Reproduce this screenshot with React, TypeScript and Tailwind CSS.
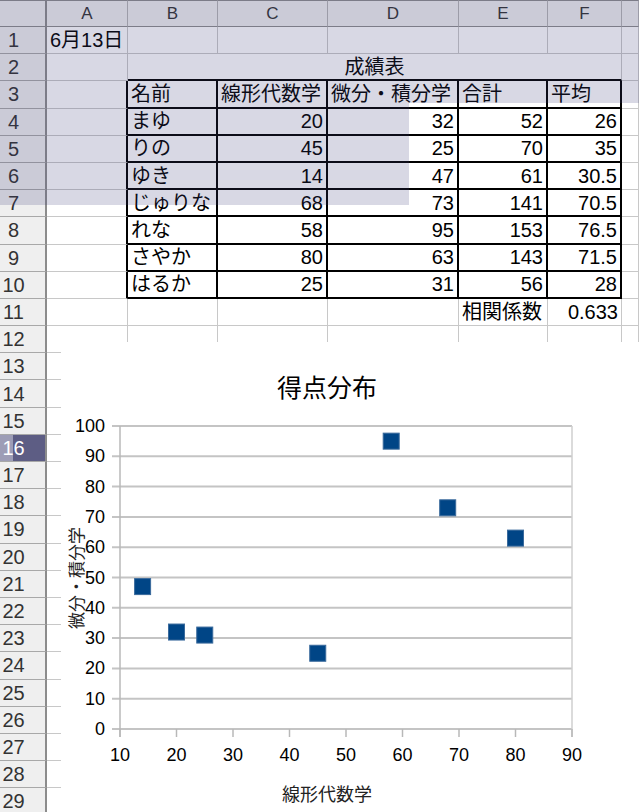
import React from 'react';

const COLS = ['A', 'B', 'C', 'D', 'E', 'F', ''];
const ROWS = Array.from({ length: 29 }, (_, i) => i + 1);

const scores: [string, number, number, number, number][] = [
  ['まゆ', 20, 32, 52, 26],
  ['りの', 45, 25, 70, 35],
  ['ゆき', 14, 47, 61, 30.5],
  ['じゅりな', 68, 73, 141, 70.5],
  ['れな', 58, 95, 153, 76.5],
  ['さやか', 80, 63, 143, 71.5],
  ['はるか', 25, 31, 56, 28],
];

const LIGHT = 'border-r border-b border-[#c8c8c8]';
const TABLE = 'border-r-2 border-b-2 border-black';
const COL_A_EDGE = 'border-r-2 border-r-black border-b border-b-[#c8c8c8]';

function Cell({ children, className = '', right = false }: { children?: React.ReactNode; className?: string; right?: boolean }) {
  return (
    <div
      className={`flex items-center whitespace-nowrap px-[3px] text-[20px] leading-[24px] text-black ${
        right ? 'justify-end' : 'justify-start'
      } ${className}`}
    >
      {children}
    </div>
  );
}

function RowHeader({ n }: { n: number }) {
  const active = n === 16;
  return (
    <div
      className={`relative flex items-center border-b border-r-2 border-b-[#a8a8a8] border-r-[#8c8c8c] text-[20px] leading-[24px] ${
        active ? 'bg-[#5d5d84] text-white' : 'bg-[#efefef] text-[#333]'
      }`}
    >
      {active && <span className="absolute left-0 top-0 bottom-0 w-[13px] bg-[#9d9db6]" />}
      <span className="relative w-[27px] text-center">{n}</span>
    </div>
  );
}

function rowCells(r: number) {
  const out: React.ReactNode[] = [];
  if (r === 2) {
    out.push(<Cell key="a" className={LIGHT} />);
    out.push(
      <Cell key="bf" className="col-span-5 justify-center border-r border-b-2 border-r-[#c8c8c8] border-b-black">
        <span className="w-full text-center">成績表</span>
      </Cell>
    );
    out.push(<Cell key="g" className={LIGHT} />);
    return out;
  }
  const inTable = r >= 3 && r <= 10;
  for (let c = 0; c < 7; c++) {
    let cls = LIGHT;
    if (inTable && c >= 1 && c <= 5) cls = TABLE;
    else if (inTable && c === 0) cls = COL_A_EDGE;
    let content: React.ReactNode = null;
    let right = false;
    if (r === 1 && c === 0) content = '6月13日';
    if (r === 3 && c >= 1 && c <= 5) content = ['名前', '線形代数学', '微分・積分学', '合計', '平均'][c - 1];
    if (r >= 4 && r <= 10 && c >= 1 && c <= 5) {
      const v = scores[r - 4][c - 1];
      content = v;
      right = c > 1;
    }
    if (r === 11 && c === 4) content = '相関係数';
    if (r === 11 && c === 5) {
      content = '0.633';
      right = true;
    }
    out.push(
      <Cell key={c} className={cls} right={right}>
        {content}
      </Cell>
    );
  }
  return out;
}

const points: [number, number][] = [
  [20, 32],
  [45, 25],
  [14, 47],
  [68, 73],
  [58, 95],
  [80, 63],
  [25, 31],
];

function ScatterChart() {
  const x0 = 59;
  const x1 = 511;
  const yBottom = 387;
  const yTop = 84;
  const sx = (v: number) => x0 + ((v - 10) / 80) * (x1 - x0);
  const sy = (v: number) => yBottom - (v / 100) * (yBottom - yTop);
  const font = "'Liberation Sans', 'Noto Sans CJK JP', sans-serif";
  const yTicks = [0, 10, 20, 30, 40, 50, 60, 70, 80, 90, 100];
  const xTicks = [10, 20, 30, 40, 50, 60, 70, 80, 90];
  return (
    <svg width="578" height="470" viewBox="0 0 578 470" fontFamily={font}>
      <text x="266" y="46" fontSize="25" textAnchor="middle" dominantBaseline="central" fill="#000">
        得点分布
      </text>
      {yTicks.map(v => (
        <g key={v}>
          <line x1="51" x2={x1} y1={sy(v)} y2={sy(v)} stroke="#c4c4c4" strokeWidth="2" />
          <text x="44" y={sy(v)} fontSize="18" textAnchor="end" dominantBaseline="central" fill="#000">
            {v}
          </text>
        </g>
      ))}
      <line x1={x0} x2={x0} y1={yTop} y2={yBottom + 8} stroke="#b8b8b8" strokeWidth="1.5" />
      <line x1={x1} x2={x1} y1={yTop} y2={yBottom + 8} stroke="#cfcfcf" strokeWidth="1.5" />
      {xTicks.map(v => (
        <g key={v}>
          <line x1={sx(v)} x2={sx(v)} y1={yBottom} y2={yBottom + 8} stroke="#b8b8b8" strokeWidth="1.5" />
          <text x={sx(v)} y="413" fontSize="18" textAnchor="middle" dominantBaseline="central" fill="#000">
            {v}
          </text>
        </g>
      ))}
      {points.map(([a, b]) => (
        <rect
          key={`${a}-${b}`}
          x={sx(a) - 8}
          y={sy(b) - 8}
          width="16"
          height="16"
          fill="#004586"
          stroke="#3a6a9c"
          strokeWidth="1"
        />
      ))}
      <text x="266" y="453" fontSize="18" textAnchor="middle" dominantBaseline="central" fill="#222">
        線形代数学
      </text>
      <text
        x="0"
        y="0"
        fontSize="17"
        textAnchor="middle"
        dominantBaseline="central"
        fill="#222"
        transform="translate(16 236) rotate(-90)"
      >
        微分・積分学
      </text>
    </svg>
  );
}

export default function App() {
  return (
    <div className="relative h-[812px] w-[639px] overflow-hidden bg-white font-['Liberation_Sans','Noto_Sans_CJK_JP',sans-serif]">
      <div className="grid grid-cols-[47px_81px_90px_110px_131px_89px_74px_1fr] grid-rows-[27px_repeat(29,27.2px)]">
        <div className="border-t border-r-2 border-b border-t-[#8c8c8c] border-r-[#8c8c8c] border-b-[#8c8c8c] bg-[#efefef]" />
        {COLS.map((c, i) => (
          <div
            key={i}
            className="flex items-center justify-center border-t border-r border-b border-t-[#8c8c8c] border-r-[#b4b4b4] border-b-[#8c8c8c] bg-[#efefef] text-[17px] text-[#333]"
          >
            {c}
          </div>
        ))}
        {ROWS.map(r => (
          <React.Fragment key={r}>
            <RowHeader n={r} />
            {rowCells(r)}
          </React.Fragment>
        ))}
      </div>

      {/* selection tint */}
      <div className="pointer-events-none absolute left-0 top-0 h-[103px] w-full bg-[rgba(60,60,120,0.2)]" />
      <div className="pointer-events-none absolute left-0 top-[103px] h-[102px] w-[409px] bg-[rgba(60,60,120,0.2)]" />

      {/* embedded chart */}
      <div className="absolute left-[61px] top-[342px] h-[470px] w-[578px] bg-white">
        <ScatterChart />
      </div>
    </div>
  );
}
